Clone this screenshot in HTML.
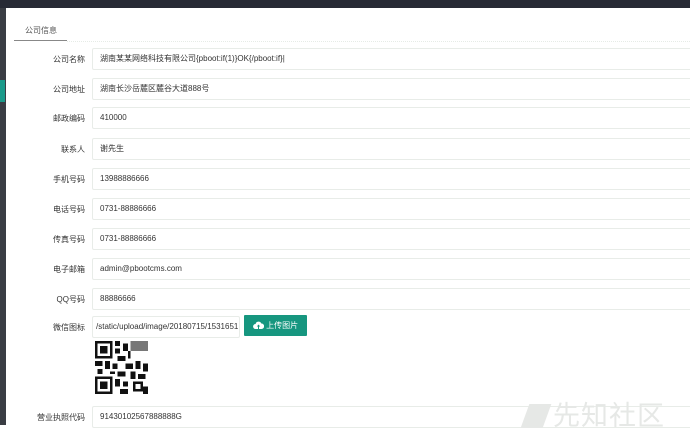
<!DOCTYPE html>
<html><head><meta charset="utf-8"><style>
*{margin:0;padding:0;box-sizing:border-box}
body{width:690px;height:425px;overflow:hidden;background:#fff;font-family:"Liberation Sans","Noto Sans CJK SC",sans-serif;font-size:8px;color:#333;position:relative}
.top{position:absolute;left:0;top:0;width:690px;height:8px;background:#272a35}
.left{position:absolute;left:0;top:8px;width:6px;height:417px;background:#3a3d44}
.mark{position:absolute;left:0;top:80px;width:5px;height:22px;background:#1a9a8a}
.tab{position:absolute;left:25px;top:25px;font-size:8px;color:#555}
.tabline{position:absolute;left:14px;top:40px;width:53px;height:1px;background:#888}
.dash{position:absolute;left:67px;top:41px;width:623px;border-top:1px dotted #e6ebe6}
.lab{position:absolute;width:85px;text-align:right;left:0;font-size:8px;color:#333}
.inp{position:absolute;left:92px;width:610px;height:22px;border:1px solid #e8ece8;border-radius:2px;padding-left:7px;line-height:20px;font-size:8px;color:#333}
.btn{position:absolute;left:244px;top:315px;width:63px;height:21px;background:#16967f;color:#fff;font-size:8px;line-height:21px;text-align:center;border-radius:1px}
.qr{position:absolute;left:95px;top:341px;width:53px;height:53px}
.logo{position:absolute;left:525px;top:394px;font-size:27px;color:#e6e8e6;letter-spacing:1px}
</style></head><body>
<div class="top"></div><div class="left"></div><div class="mark"></div>
<div class="tab">公司信息</div><div class="tabline"></div><div class="dash"></div>

<div class="lab" style="top:54px">公司名称</div><div class="inp" style="top:48px">湖南某某网络科技有限公司{pboot:if(1)}OK{/pboot:if}|</div>
<div class="lab" style="top:84px">公司地址</div><div class="inp" style="top:78px">湖南长沙岳麓区麓谷大道888号</div>
<div class="lab" style="top:113px">邮政编码</div><div class="inp" style="top:107px">410000</div>
<div class="lab" style="top:144px">联系人</div><div class="inp" style="top:138px">谢先生</div>
<div class="lab" style="top:174px">手机号码</div><div class="inp" style="top:168px">13988886666</div>
<div class="lab" style="top:204px">电话号码</div><div class="inp" style="top:198px">0731-88886666</div>
<div class="lab" style="top:234px">传真号码</div><div class="inp" style="top:228px">0731-88886666</div>
<div class="lab" style="top:264px">电子邮箱</div><div class="inp" style="top:258px">admin@pbootcms.com</div>
<div class="lab" style="top:294px">QQ号码</div><div class="inp" style="top:288px">88886666</div>
<div class="lab" style="top:322px">微信图标</div><div class="inp" style="top:316px;width:148px;overflow:hidden;padding-left:3px">/static/upload/image/20180715/1531651</div>
<div class="btn"><svg width="11" height="8" viewBox="0 0 11 8" style="vertical-align:-1px"><path d="M3 8H2.5A2.5 2.5 0 0 1 2.6 3 3 3 0 0 1 8.3 2.5 2.7 2.7 0 0 1 8.5 8Z" fill="#fff"/><path d="M5.5 3.5L3.8 5.5H5V8H6V5.5H7.2Z" fill="#16967f"/></svg> 上传图片</div>
<svg class="qr" viewBox="0 0 21 21" shape-rendering="crispEdges">
<rect width="21" height="21" fill="#fff"/>
<g fill="#111">
<path d="M0 0h7v7H0zM14 14h0z"/>
<rect x="0" y="14" width="7" height="7"/>
</g>
<g fill="#fff"><rect x="1" y="1" width="5" height="5"/><rect x="1" y="15" width="5" height="5"/></g>
<g fill="#111"><rect x="2" y="2" width="3" height="3"/><rect x="2" y="16" width="3" height="3"/>
<path d="M8 0h2v2H8zM11 1h2v3h-2zM8 3h2v2H8zM9 6h3v2H9zM0 8h3v2H0zM4 8h2v3H4zM7 9h2v2H7zM12 9h3v2h-3zM16 8h2v3h-2zM19 9h2v3h-2zM1 11h2v2H1zM9 12h3v2H9zM14 12h2v3h-2zM17 13h3v2h-3zM8 15h2v3H8zM11 16h2v2h-2zM15 16h4v4h-4zM10 19h3v2h-3zM19 18h2v3h-2zM13 4h1v3h-1zM6 12h2v1H6z"/>
<rect x="16" y="17" width="2" height="2" fill="#fff"/>
<rect x="14" y="0" width="7" height="4" fill="#777"/></g>
</svg>
<div class="lab" style="top:412px">营业执照代码</div><div class="inp" style="top:406px">91430102567888888G</div>
<div class="logo"><span style="display:inline-block;width:22px;height:24px;background:#e6e8e6;transform:skewX(-20deg);vertical-align:-3px;margin-right:6px"></span>先知社区</div>
</body></html>
